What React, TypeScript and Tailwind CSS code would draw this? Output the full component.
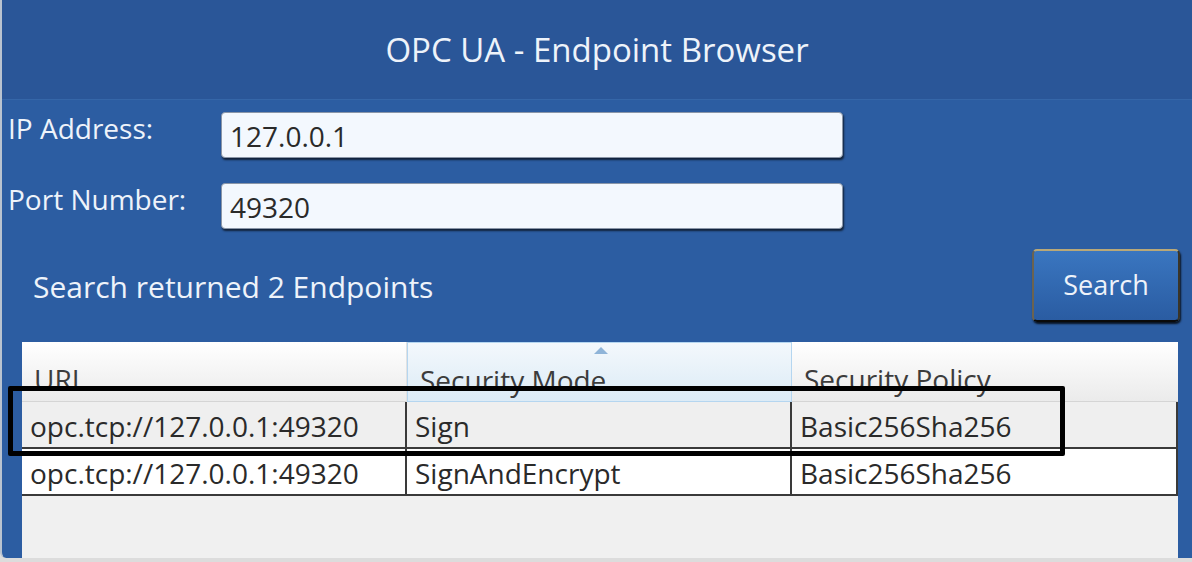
import React from "react";

const font = { fontFamily: '"Open Sans", "Noto Sans", sans-serif' };

function Input({ value }: { value: string }) {
  return (
    <div className="h-[46px] w-[622px] rounded-[4px] border border-[#8a96a8] bg-[#f3f8fe] shadow-[1px_2px_2px_rgba(0,0,0,0.65)] flex items-center pl-[8px] pt-[2px] text-[28px] text-[#2a2a2a]">
      {value}
    </div>
  );
}

const rows = [
  { url: "opc.tcp://127.0.0.1:49320", mode: "Sign", policy: "Basic256Sha256", bg: "bg-[#efefef]" },
  { url: "opc.tcp://127.0.0.1:49320", mode: "SignAndEncrypt", policy: "Basic256Sha256", bg: "bg-white" },
];

export default function App() {
  return (
    <div className="relative w-[1192px] h-[562px] overflow-hidden bg-[#dcdcdc]" style={font}>
      <div className="h-[558px] flex flex-col bg-[#2c5da2] border-l-2 border-[#b9c3d0] rounded-bl-[6px] overflow-hidden">
        <div className="h-[100px] shrink-0 bg-[#2a5698] flex items-center justify-center text-[33px] text-[#eef3fa] border-b border-[#3566a8]">
          OPC UA - Endpoint Browser
        </div>
        <div className="pt-[12px] grid grid-cols-[219px_622px] gap-y-[25px]">
          <div className="pl-[6px] text-[28px] text-[#eef3fa] leading-[32px]">IP Address:</div>
          <Input value="127.0.0.1" />
          <div className="pl-[6px] text-[28px] text-[#eef3fa] leading-[32px]">Port Number:</div>
          <Input value="49320" />
        </div>
        <div className="mt-[20px] h-[73px] flex items-center justify-between pl-[31px] pr-[12px]">
          <div className="text-[30px] text-[#eef3fa] pt-[2px]">Search returned 2 Endpoints</div>
          <div className="w-[148px] h-[73px] rounded-[5px] border-[2px] border-t-[#b9a878] border-l-[#6b6350] border-r-[#3a3528] border-b-[#0a0a0a] bg-gradient-to-b from-[#3a76c0] to-[#2a5ca2] shadow-[1px_2px_2px_rgba(0,0,0,0.8)] flex items-center justify-center text-[27px] text-[#eef3fa]">
            Search
          </div>
        </div>
        <div className="mt-[20px] ml-[20px] mr-[14px] flex-1 bg-[#f0f0f0] flex flex-col">
          <div className="h-[60px] grid grid-cols-[385px_385px_1fr] bg-gradient-to-b from-white to-[#ebebeb] border-b border-[#d5d5d5]">
            <div className="pl-[12px] pt-[16px] text-[28px] text-[#3c3c3c] border-r border-[#e2e2e2]">URL</div>
            <div className="relative pl-[12px] pt-[16px] text-[28px] text-[#3c3c3c] bg-gradient-to-b from-[#f3f8fc] to-[#dcebf6] border border-[#b5d6f0]">
              <div className="absolute left-[186px] top-[4px] w-0 h-0 border-l-[7px] border-r-[7px] border-b-[7px] border-l-transparent border-r-transparent border-b-[#8fb4d8]" />
              Security Mode
            </div>
            <div className="pl-[12px] pt-[16px] text-[28px] text-[#3c3c3c]">Security Policy</div>
          </div>
          {rows.map((r, i) => (
            <div
              key={i}
              className={`h-[47px] grid grid-cols-[385px_385px_1fr] ${r.bg} border-b-2 border-[#3a3a3a] text-[28px] text-[#2a2a2a]`}
            >
              <div className="pl-[8px] pt-[2px] flex items-center border-r-2 border-[#3a3a3a]">{r.url}</div>
              <div className="pl-[8px] pt-[2px] flex items-center border-r-2 border-[#3a3a3a]">{r.mode}</div>
              <div className="pl-[8px] pt-[2px] flex items-center border-r-2 border-[#3a3a3a]">{r.policy}</div>
            </div>
          ))}
        </div>
      </div>
      <div className="absolute left-[8px] top-[386px] w-[1057px] h-[70px] border-[5px] border-black rounded-[2px]" />
    </div>
  );
}
